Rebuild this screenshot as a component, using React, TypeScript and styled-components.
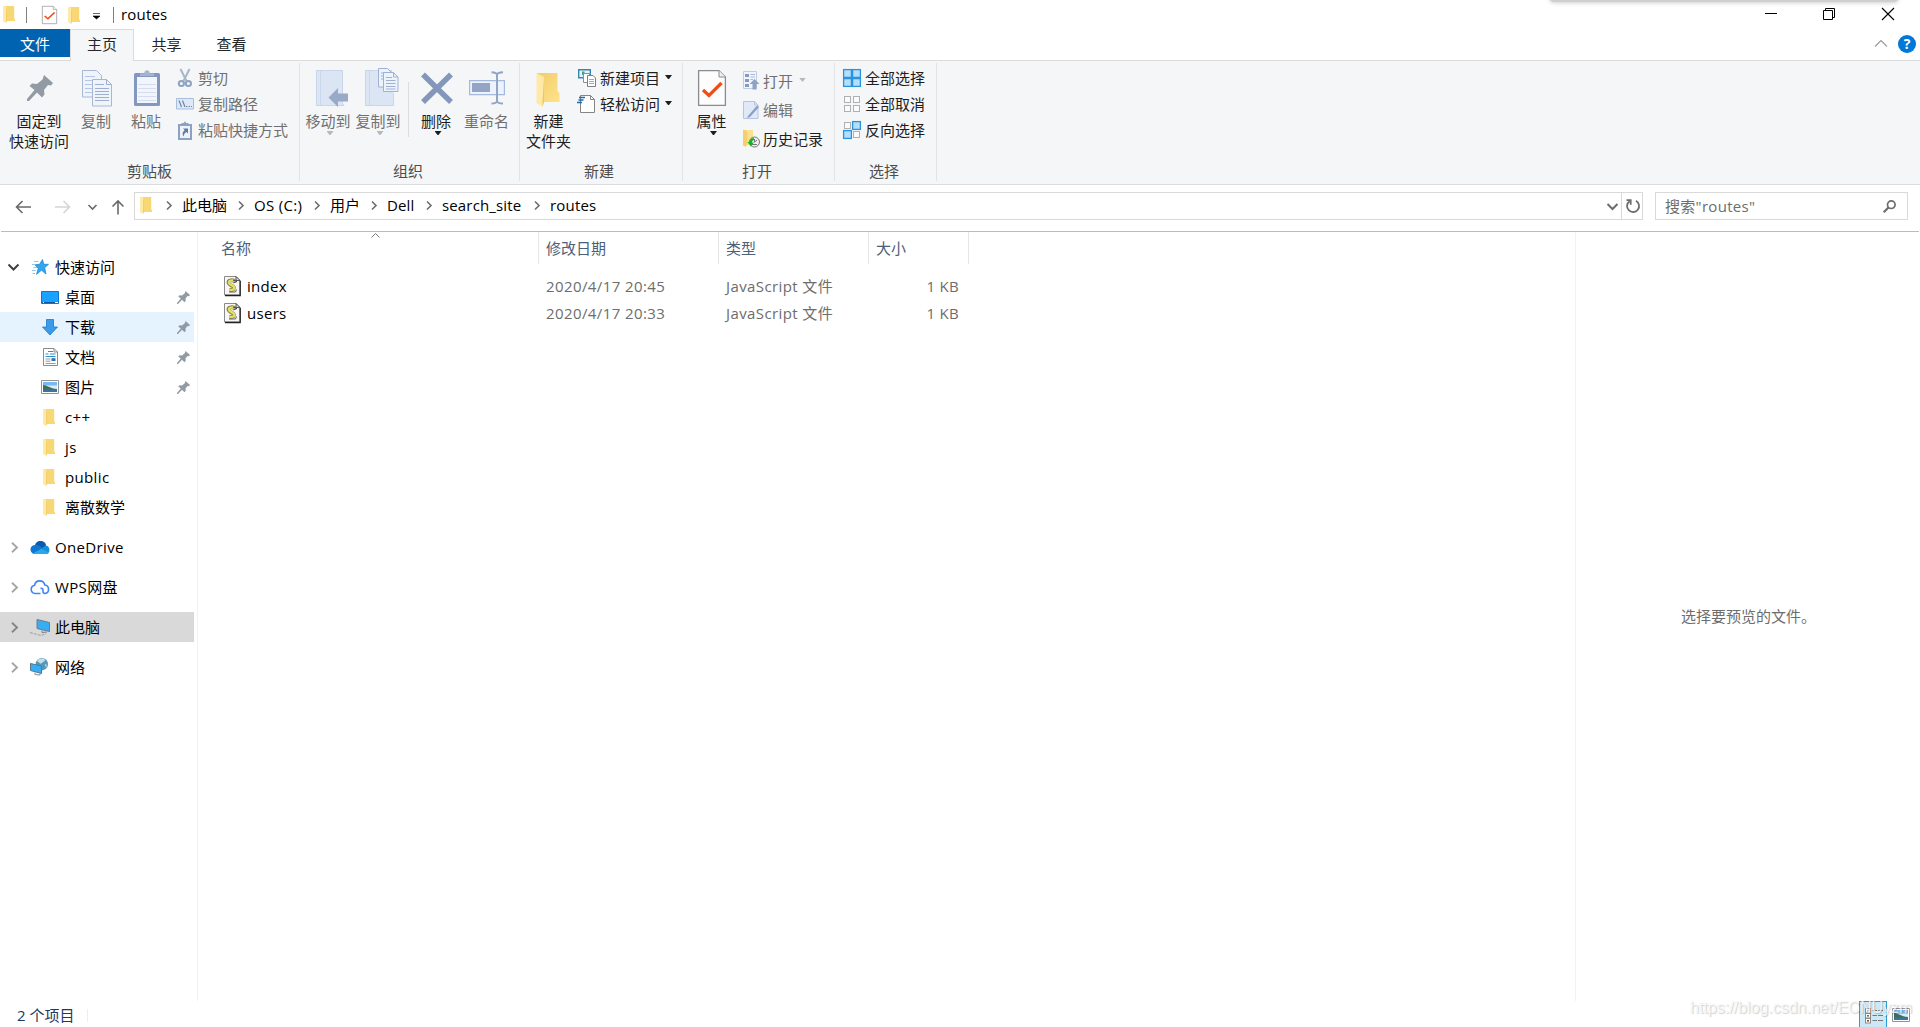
import React from "react";
import styled, { createGlobalStyle } from "styled-components";

const Global = createGlobalStyle`
  * { box-sizing: border-box; }
  body { margin: 0; background: #fff; overflow: hidden; }
`;

const Window = styled.div`
  width: 1920px;
  height: 1027px;
  display: flex;
  flex-direction: column;
  background: #fff;
  color: #000;
  font: 15px/20px "Open Sans", "Noto Sans CJK SC", sans-serif;
  white-space: nowrap;
  overflow: hidden;
  position: relative;
`;

const Svg = styled.svg`
  display: block;
  flex: none;
  overflow: visible;
`;

/* ---------- title bar ---------- */
const TitleBar = styled.header`
  height: 29px;
  display: flex;
  align-items: flex-start;
  padding-left: 3px;
`;
const TitleItem = styled.div<{ $ml?: number; $mt?: number }>`
  margin-left: ${(p) => p.$ml ?? 0}px;
  margin-top: ${(p) => p.$mt ?? 0}px;
`;
const TitleRule = styled.div<{ $ml: number }>`
  width: 1px;
  height: 16px;
  margin: 7px 0 0 ${(p) => p.$ml}px;
  background: #808080;
`;
const Title = styled.div`
  margin: 4px 0 0 7px;
  letter-spacing: 0.2px;
`;
const Controls = styled.div`
  margin: 8px 26px 0 auto;
  display: grid;
  grid-template-columns: 58px 59px 12px;
`;
const TopShadow = styled.div`
  position: absolute;
  left: 1550px;
  top: -6px;
  width: 348px;
  height: 8px;
  background: #cfcfcf;
  box-shadow: 0 0 4px 1px #cfcfcf;
  border-radius: 4px;
`;

/* ---------- tabs ---------- */
const Tabs = styled.nav`
  height: 32px;
  display: flex;
  border-bottom: 1px solid #dadbdc;
`;
const Tab = styled.div<{ $kind?: "file" | "active" }>`
  width: ${(p) => (p.$kind === "file" ? 70 : p.$kind === "active" ? 64 : 65)}px;
  height: ${(p) => (p.$kind === "file" ? 28 : 32)}px;
  padding-top: ${(p) => (p.$kind === "active" ? 4 : 5)}px;
  text-align: center;
  color: ${(p) => (p.$kind === "file" ? "#fff" : "#262626")};
  background: ${(p) => (p.$kind === "file" ? "#0063b1" : p.$kind === "active" ? "#f5f6f7" : "transparent")};
  border: ${(p) => (p.$kind === "active" ? "1px solid #dadbdc" : "0")};
  border-bottom: 0;
`;
const TabsRight = styled.div`
  margin: 6px 4px 0 auto;
  display: flex;
  gap: 11px;
`;
const Help = styled.div`
  width: 18px;
  height: 18px;
  border-radius: 50%;
  background: #0078d7;
  color: #fff;
  font: bold 14px/18px "Open Sans", sans-serif;
  text-align: center;
`;

/* ---------- ribbon ---------- */
const Ribbon = styled.section`
  height: 124px;
  display: flex;
  background: #f5f6f7;
  border-bottom: 1px solid #dadbdc;
`;
const Group = styled.div<{ $w: number }>`
  width: ${(p) => p.$w}px;
  height: 118px;
  margin-top: 2px;
  border-right: 1px solid #e2e3e4;
  display: flex;
  flex-direction: column;
`;
const GroupBody = styled.div<{ $pl: number }>`
  height: 99px;
  padding-left: ${(p) => p.$pl}px;
  display: flex;
`;
const GroupName = styled.div<{ $shift?: number }>`
  text-align: center;
  color: #4d4d4d;
  padding-right: ${(p) => p.$shift ?? 0}px;
`;
const Big = styled.div<{ $w: number; $off?: boolean }>`
  width: ${(p) => p.$w}px;
  display: flex;
  flex-direction: column;
  align-items: center;
  color: ${(p) => (p.$off ? "#707070" : "#1e1e1e")};
`;
const BigIcon = styled.div`
  height: 48px;
  padding-top: 3px;
`;
const Caption = styled.div``;
const Drop = styled.div<{ $off?: boolean; $ml?: number; $mt?: number }>`
  width: 7px;
  height: 4px;
  margin-left: ${(p) => p.$ml ?? 0}px;
  margin-top: ${(p) => p.$mt ?? 0}px;
  background: ${(p) => (p.$off ? "#b8b8b8" : "#1e1e1e")};
  clip-path: polygon(0 0, 100% 0, 57% 100%, 43% 100%);
`;
const Split = styled.div<{ $ml: number; $mr: number }>`
  width: 1px;
  height: 55px;
  margin: 19px ${(p) => p.$mr}px 0 ${(p) => p.$ml}px;
  background: #dcdddf;
`;
const Stack = styled.div<{ $ml?: number; $pt: number; $row: number }>`
  margin-left: ${(p) => p.$ml ?? 0}px;
  padding-top: ${(p) => p.$pt}px;
  display: grid;
  grid-auto-rows: ${(p) => p.$row}px;
  align-content: start;
`;
const Small = styled.div<{ $off?: boolean; $gap?: number }>`
  display: flex;
  align-items: center;
  gap: ${(p) => p.$gap ?? 4}px;
  color: ${(p) => (p.$off ? "#707070" : "#1e1e1e")};
`;

/* ---------- address row ---------- */
const AddressRow = styled.div`
  height: 46px;
  display: flex;
  padding: 7px 12px 0 16px;
`;
const NavButtons = styled.div`
  width: 118px;
  height: 28px;
`;
const PathBox = styled.div`
  width: 1509px;
  height: 28px;
  border: 1px solid #d9d9d9;
  display: flex;
  align-items: center;
  padding-left: 5px;
`;
const Crumb = styled.div<{ $w: number; $ls?: number }>`
  width: ${(p) => p.$w}px;
  display: flex;
  letter-spacing: ${(p) => p.$ls ?? 0}px;
  align-items: center;
  margin-top: -2px;
`;
const CrumbArrow = styled.span`
  width: 16px;
  display: block;
`;
const Refresh = styled.div`
  width: 21px;
  height: 26px;
  margin-left: 3px;
  padding-left: 2px;
  border-left: 1px solid #d9d9d9;
  display: flex;
  align-items: center;
  justify-content: center;
`;
const PathEnd = styled.div`
  margin-left: auto;
  display: flex;
  align-items: center;
`;
const Search = styled.div`
  width: 253px;
  height: 28px;
  margin-left: 12px;
  padding: 0 11px 0 9px;
  border: 1px solid #d9d9d9;
  display: flex;
  align-items: center;
  justify-content: space-between;
  color: #6d6d6d;
  letter-spacing: 0.3px;
`;

/* ---------- body ---------- */
const Body = styled.main`
  height: 770px;
  margin: 0 1px;
  border-top: 1px solid #bcbcbc;
  display: flex;
`;
const Side = styled.aside`
  width: 198px;
  margin-left: -1px;
  padding: 20px 3px 0 0;
  border-right: 1px solid #f2f2f2;
  flex: none;
`;
const SideRow = styled.div<{ $bg?: string; $sub?: boolean; $gap?: boolean }>`
  height: 30px;
  margin-top: ${(p) => (p.$gap ? 10 : 0)}px;
  padding-left: ${(p) => (p.$sub ? 41 : 7)}px;
  padding-right: 4px;
  display: flex;
  align-items: center;
  background: ${(p) => p.$bg ?? "transparent"};
`;
const IconSlot = styled.div<{ $w: number }>`
  width: ${(p) => p.$w}px;
`;
const SideText = styled.div<{ $ls?: number }>`
  flex: 1;
  letter-spacing: ${(p) => p.$ls ?? 0}px;
`;
const Files = styled.section`
  flex: 1;
  position: relative;
`;
const Head = styled.div`
  height: 32px;
  display: grid;
  grid-template-columns: 341px 180px 150px 100px;
  color: #4c607a;
`;
const HeadCell = styled.div<{ $pl: number }>`
  padding: 6px 0 0 ${(p) => p.$pl}px;
  border-right: 1px solid #e5e5e5;
`;
const SortMark = styled.div`
  position: absolute;
  left: 173px;
  top: 1px;
`;
const FileList = styled.div`
  padding-top: 8px;
`;
const FileRow = styled.div`
  height: 27px;
  display: grid;
  grid-template-columns: 28px 320px 180px 133px 100px;
  align-items: center;
  color: #6d6d6d;
`;
const FileIcon = styled.div`
  padding-left: 26px;
`;
const FileName = styled.div`
  color: #000;
  padding-left: 21px;
  letter-spacing: 0.3px;
`;
const Meta = styled.div`
  letter-spacing: 0.4px;
`;
const Size = styled.div`
  text-align: right;
  letter-spacing: 0.3px;
`;
const Preview = styled.aside`
  width: 344px;
  border-left: 1px solid #f2f2f2;
  padding-top: 374px;
  padding-left: 105px;
  color: #6d6d6d;
`;

/* ---------- status ---------- */
const Status = styled.footer`
  height: 26px;
  display: flex;
  padding: 0 10px 0 17px;
  color: #1e395b;
`;
const StatusText = styled.div`
  width: 70px;
  padding-top: 4px;
`;
const StatusRule = styled.div`
  width: 1px;
  height: 13px;
  margin-top: 8px;
  background: #eee;
`;
const ViewModes = styled.div`
  margin-left: auto;
  display: flex;
  gap: 5px;
`;
const ModeOn = styled.div`
  width: 28px;
  height: 28px;
  background: #cce8f6;
  border: 1px solid #26a0da;
  padding: 6px 0 0 5px;
`;
const ModeOff = styled.div`
  padding-top: 7px;
`;
const Watermark = styled.div`
  position: absolute;
  left: 1690px;
  top: 998px;
  font: 16px/20px "Liberation Sans", Arial, sans-serif;
  color: rgba(255, 255, 255, 0.8);
  text-shadow: 1px 1px 1px rgba(0, 0, 0, 0.18), 0 0 1px rgba(0, 0, 0, 0.08);
`;

/* ---------- drawings ---------- */
const Folder = ({ w = 12, h = 17 }: { w?: number; h?: number }) => (
  <Svg width={w} height={h} viewBox="0 0 12 17" preserveAspectRatio="none">
    <path d="M2 0h9.2v12.5l.8.4V15H2z" fill="#f8d775" />
    <path d="M0 0h2.2L4 2.5V15l-1 2-3-1.800z" fill="#ffe9a6" />
    <path d="M3.300 2.200 4 2.500V15l-.8 1.800z" fill="#eec65a" />
  </Svg>
);
const BigFolder = () => (
  <Svg width="24" height="36" viewBox="0 0 24 36">
    <defs>
      <linearGradient id="bf" x1="0" y1="0" x2="1" y2="1">
        <stop offset="0" stopColor="#efcd6c" />
        <stop offset="1" stopColor="#ffe28a" />
      </linearGradient>
    </defs>
    <path d="M1 1h20.500v18l2 2v9H6z" fill="url(#bf)" />
    <path d="M.5 1 8 5v25l-1.500 5L.5 31z" fill="#ffe9a9" />
    <path d="M8 5v25l-1.500 5V30z" fill="#e9c763" />
  </Svg>
);
const Pin = ({ s = 14 }: { s?: number }) => (
  <Svg width={s} height={s} viewBox="0 0 26 26">
    <path d="M17 0l9 8-2 2.500-3-.5-4 5 .5 4.500-2.500 3L10 17.500 2 26H0v-2l7.500-9L2.500 11 5 8.500l5 .5 5.500-4.500z" fill="#929ba3" />
  </Svg>
);
const CheckPage = ({ w, h }: { w: number; h: number }) => (
  <Svg width={w} height={h} viewBox="0 0 28 36" preserveAspectRatio="none">
    <path d="M.6.6H21l6.400 6.400v28.400H.6z" fill="#fdfdfd" stroke="#8c8c8c" strokeWidth="1.300" />
    <path d="M21 .6V7h6.400" fill="#eee" stroke="#8c8c8c" />
    <path d="M5 20l6 5.500L23.500 13" fill="none" stroke="#f04e14" strokeWidth="3.200" />
  </Svg>
);
const CopyPages = () => (
  <Svg width="30" height="37" viewBox="0 0 30 37" fill="#eff4fb" stroke="#a8b8d3">
    <path d="M.5.500h14l5 5v21.500H.5z" />
    <path d="M3 6.500h10M3 10.500h13M3 14.500h8M3 18.500h8M3 22.500h8" stroke="#b4c6e4" />
    <path d="M10.500 9.500h14l5 5v21.500h-19z" />
    <path d="M24.500 9.500v5h5M13 14.500h9M13 18.500h14M13 21.500h14M13 24.500h14M13 27.500h14M13 30.500h14" fill="none" stroke="#9db0d2" />
  </Svg>
);
const Clipboard = () => (
  <Svg width="26" height="37" viewBox="0 0 26 37">
    <rect y="4" width="26" height="33" rx="1.500" fill="#8497bc" />
    <path d="M3 8h20v26H3z" fill="#f2f5fb" />
    <path d="M4 15.500h18M4 19.500h18M4 23.500h18M4 27.500h18M4 31.500h18" stroke="#d3dded" />
    <path d="M6 7V4.500h4.500a2.600 2.600 0 1 1 5 0H20V7z" fill="#a5b4d0" />
  </Svg>
);
const Scissors = () => (
  <Svg width="14" height="19" viewBox="0 0 14 19" fill="none" stroke="#8ea3c0" strokeWidth="2">
    <path d="M2.500 0 8.500 12M11.500 0l-6 12" stroke="#a9b6c8" />
    <circle cx="3.400" cy="14.500" r="2.600" />
    <circle cx="10.400" cy="14.500" r="2.600" />
  </Svg>
);
const PathIcon = () => (
  <Svg width="18" height="12" viewBox="0 0 18 12">
    <path d="M.5.500h17v10.500H.5z" fill="#dfe9f6" stroke="#a8bddb" />
    <path d="M3 2.500 5.500 9M6.500 2.500 9 9M10 8.500h1.500M12.500 8.500H14M15 8.500h1" stroke="#6f87ad" strokeWidth="1.200" />
  </Svg>
);
const Shortcut = () => (
  <Svg width="14" height="19" viewBox="0 0 14 19">
    <path d="M1 4h12v14H1z" fill="#eef3fa" stroke="#8da1c4" strokeWidth="2" />
    <path d="M3.500 4V2H6a1 1.500 0 0 1 2 0h2.500v2z" fill="#8da1c4" />
    <path d="M5 7.500h5v5L8.500 11C6.500 12 6 13 5.700 15.500 3.700 13 5 10.500 6.700 9.300z" fill="#6179a5" />
  </Svg>
);
const MoveTo = () => (
  <Svg width="32" height="38" viewBox="0 0 32 38">
    <path d="M.5.500h26v33l1.500 2H.5z" fill="#dbe5f3" stroke="#c8d5ea" />
    <path d="M4.500 1v34" stroke="#cad8ed" />
    <path d="M12.500 27.500 22 18v5.500h10v8H22V37z" fill="#99aac8" />
  </Svg>
);
const CopyTo = () => (
  <Svg width="34" height="39" viewBox="0 0 34 39">
    <path d="M.5 2.500h26v22l2 1v12H.5z" fill="#dbe5f3" stroke="#c8d5ea" />
    <path d="M4.500 3v34" stroke="#cad8ed" />
    <g fill="#edf3fb" stroke="#9fb1d3">
      <path d="M13.500.500h9l4 4V19h-13z" />
      <path d="M16 5h7M16 8h7M16 11h7" />
      <path d="M18.500 4.500h10l4.500 4.500v14.500H18.500z" />
      <path d="M28.500 4.500V9H33M21 9.500h6M21 12.500h9.500M21 15.500h9.500M21 18.500h9.500M21 21h9.500" fill="none" />
    </g>
  </Svg>
);
const DeleteX = () => (
  <Svg width="32" height="32" viewBox="0 0 32 32">
    <path d="M2 2.500 30 30M30 2.500 2 30" stroke="#8496ba" strokeWidth="5.500" />
  </Svg>
);
const Rename = () => (
  <Svg width="36" height="34" viewBox="0 0 36 34">
    <path d="M.6 9.600h34.800v14H.6z" fill="#edf3fc" stroke="#a4b9dc" strokeWidth="1.200" />
    <path d="M3 12h18v9H3z" fill="#93a4c4" />
    <path d="M22.500 1.200c3.500 0 5 .8 5.500 2.300.5-1.500 2-2.300 6-2.300M22.500 32.500c3.500 0 5-.8 5.500-2.300.5 1.500 2 2.300 6 2.300M28 3v28" fill="none" stroke="#93a4c4" strokeWidth="2" />
  </Svg>
);
const NewItem = () => (
  <Svg width="18" height="18" viewBox="0 0 18 18">
    <path d="M.7.700h11.600v8H.7z" fill="#e4f3fb" stroke="#3a86ac" strokeWidth="1.400" />
    <path d="M4 2.500h2.500v3.500H4z" fill="#3c9b8b" />
    <path d="M5.500 4.500h6v9h-6z" fill="#fff" stroke="#8f8f8f" />
    <path d="M9.500 6.500h5.500l2.500 2.500v8.500h-8z" fill="#fff" stroke="#7f7f7f" />
    <path d="M11 10.500h5M11 12.500h5M11 14.500h5" stroke="#7fb2e5" />
  </Svg>
);
const EasyAccess = () => (
  <Svg width="18" height="18" viewBox="0 0 18 18">
    <path d="M2.500.500h10l4 4v13h-14z" fill="#fff" stroke="#858585" />
    <path d="M12.500.500v4h4" fill="none" stroke="#858585" />
    <path d="M1 2.500h6M.5 5h5M-1 7.500h5" stroke="#1b6bb0" strokeWidth="1.500" />
  </Svg>
);
const OpenIcon = () => (
  <Svg width="17" height="19" viewBox="0 0 17 19">
    <path d="M.5.500h13v17H.5z" fill="#f0f4fb" stroke="#bfcde4" />
    <path d="M2 3h4v3H2zM2 8h4v3H2zM2 13h4v3H2z" fill="#8599c2" />
    <path d="M7.500 3.500H12M7.500 6h4.500M7.500 8.500H10" stroke="#a8b9d8" />
    <path d="M6.500 13 11.500 8l5 5h-3v5.500h-4V13z" fill="#8fa2c6" />
  </Svg>
);
const EditIcon = () => (
  <Svg width="17" height="18" viewBox="0 0 17 18">
    <path d="M.5.500h11l3.500 3.500v13.500H.5z" fill="#dfe9f7" stroke="#b5c5e0" />
    <path d="m5 15 9-10.500 2 1.500-9 10-3 1z" fill="#8c9fc4" />
    <path d="M11.500.500V4H15" fill="none" stroke="#b5c5e0" />
  </Svg>
);
const HistoryIcon = () => (
  <Svg width="17" height="18" viewBox="0 0 17 18">
    <path d="M0 0h10v7.500L6 15H0z" fill="#fae08f" />
    <path d="M0 0h2l2.500 2v11L3 17l-3-1.500z" fill="#f5cf69" />
    <circle cx="11.500" cy="12" r="5" fill="#ededed" stroke="#777" />
    <path d="M11.500 9v3.200L14 10M9 14.500h5" fill="none" stroke="#777" />
    <path d="M11 8C8 8 6.500 10 6.500 12H4.500l3.300 4.500L11 12.500H9c0-1.500.500-2 2-2.500z" fill="#18b12c" />
  </Svg>
);
const SelectIcon = ({ on }: { on: number[] }) => (
  <Svg width="18" height="18" viewBox="0 0 18 18">
    {[[0, 0], [9, 0], [0, 9], [9, 9]].map(([x, y], i) =>
      on.includes(i) ? (
        <rect key={i} x={x + 0.6} y={y + 0.6} width="7.800" height="7.800" fill="#b5def9" stroke="#2893e3" strokeWidth="1.300" />
      ) : (
        <rect key={i} x={x + (x ? 1.5 : 1.5)} y={y + 1.5} width="6" height="6" fill="#fafafa" stroke="#b0b0b0" />
      )
    )}
  </Svg>
);
const Chevron = ({ d, w, h, c = "#6d6d6d", sw = 1.6 }: { d: string; w: number; h: number; c?: string; sw?: number }) => (
  <Svg width={w} height={h} viewBox={`0 0 ${w} ${h}`}>
    <path d={d} fill="none" stroke={c} strokeWidth={sw} />
  </Svg>
);
const Star = () => (
  <Svg width="18" height="16" viewBox="0 0 18 16">
    <path d="M11.500.500l1.300 4.800H17.500l-3.800 3.400L15 15l-4.500-3.700L5.500 15.300 7.200 9.500 4 5.800l4.500-.5z" fill="#31a5ee" stroke="#1484cd" strokeWidth=".7" />
    <path d="M3 2.500h4.500M1 5.500h3.500M2.500 8.500H6M1 11.500h3.500M1.500 14.500h2.500" stroke="#8cc8ee" />
  </Svg>
);
const Desktop = () => (
  <Svg width="18" height="13" viewBox="0 0 18 13">
    <path d="M.5.500h17v12H.5z" fill="#1ba1ff" stroke="#0c77cd" />
    <path d="M1 11.500h16" stroke="#0b5a9b" />
    <path d="M2 11.500h1M14 11.500h3" stroke="#fff" />
  </Svg>
);
const Download = () => (
  <Svg width="16" height="17" viewBox="0 0 16 17">
    <path d="M4.500.500h7V8h4L8 16 .5 8h4z" fill="#3c9aea" stroke="#1c78c8" strokeWidth=".8" />
  </Svg>
);
const DocIcon = () => (
  <Svg width="15" height="18" viewBox="0 0 15 18">
    <path d="M.5.500H11L14.500 4v13.500H.5z" fill="#fff" stroke="#8a8a8a" />
    <path d="M11 .500V4h3.500" fill="none" stroke="#8a8a8a" />
    <path d="M5 3.500h5M2.500 6h3M7 6h5.500M2.500 8.500h10" stroke="#2f8fce" strokeWidth="1.200" />
    <path d="M2.500 11h5M2.500 13.200h5M2.500 15.500h10" stroke="#999" />
    <path d="M8.500 10.200h4v2.800h-4z" fill="#2773ad" />
  </Svg>
);
const Picture = () => (
  <Svg width="18" height="14" viewBox="0 0 18 14">
    <path d="M.5.500h17v13H.5z" fill="#fff" stroke="#929292" />
    <path d="M2 2h14v5H2z" fill="#7ab7f5" />
    <path d="M2 5.500h14V9H2z" fill="#d8ecfb" />
    <path d="M2 5c4 0 7 3.500 14 4v1H2z" fill="#3e6f58" />
    <path d="M2 9.500h14V12H2z" fill="#3b749c" />
  </Svg>
);
const OneDrive = () => (
  <Svg width="20" height="13" viewBox="0 0 20 13">
    <path d="M5 5C5 2 7.500 0 10.500 0c3 0 5.500 2 5.500 4.500L12 9z" fill="#0a5bb0" />
    <path d="M4.500 13A4.400 4.400 0 0 1 5.500 4c3-.5 5 1 7 3L8 13z" fill="#0f77d0" />
    <path d="M11.500 7.500 15.500 4.500A4.300 4.300 0 0 1 16 13H4.500z" fill="#1490df" />
    <path d="M2.500 12.500 11.500 7.700l7.500 4c-.7.900-1.700 1.300-3 1.300H4.500z" fill="#28a8ea" />
  </Svg>
);
const WpsCloud = () => (
  <Svg width="20" height="16" viewBox="0 0 20 16">
    <path d="M10.500 14.500H5A4.200 4.200 0 0 1 4.600 6.200 5.200 5.200 0 0 1 14.800 6a4.300 4.300 0 0 1 .2 8.500c-2.500 0-2-2.500-2-3.500S12 9 10.500 9.500" fill="none" stroke="#4286f5" strokeWidth="1.600" />
  </Svg>
);
const ThisPc = () => (
  <Svg width="20" height="17" viewBox="0 0 20 17">
    <path d="M7 .500 19.500 3.500v9L7 9.500z" fill="#36adf5" stroke="#6c7c89" />
    <path d="M12 11.500v2l5-.5" fill="none" stroke="#77838d" />
    <path d="M0 13.500l11 3 5-2" fill="none" stroke="#a9b0b5" strokeWidth="1.300" strokeDasharray="3 1" />
  </Svg>
);
const Network = () => (
  <Svg width="18" height="18" viewBox="0 0 18 18">
    <circle cx="11.800" cy="6.200" r="6.200" fill="#5798b8" />
    <path d="M7 3c2-3 7-3 8-1-1 3-4 2-4 4M15 6c2 0 2 2 1 4" fill="#bfe0ec" />
    <path d="M.5 5.500 11.500 8v7.500L.5 12.500z" fill="#36adf5" stroke="#55788d" />
    <path d="M5 14.500v2l5 .5v-1.500" fill="none" stroke="#83909a" />
  </Svg>
);
const ScriptFile = () => (
  <Svg width="17" height="20" viewBox="0 0 17 20">
    <path d="M.5.500h11.500l4 4v14.500H.5z" fill="#f7f7f7" stroke="#8a8a8a" />
    <path d="M16.200 5v14.500H1" fill="none" stroke="#222" strokeWidth="1.300" />
    <path d="M12 .500v4h4z" fill="#ddd" stroke="#333" strokeWidth=".8" />
    <path d="M11.500 5.500C9 3.500 4 4 4.500 7c.5 2.500 5.500 2.500 5.500 5 0 1.500-2 2-4.500 2" fill="none" stroke="#80804a" strokeWidth="3.800" />
    <path d="M10.500 5C8.500 4 4.500 4.500 5 7c.5 2 5.500 2.500 5.500 5 0 1.500-2.500 2.200-5 2" fill="none" stroke="#e6df66" strokeWidth="2.400" />
    <path d="M9 4l4 1.500-3.500 1.500" fill="#aaa" stroke="#444" strokeWidth=".9" />
    <path d="M5 16h6.500l1-2.500" fill="none" stroke="#555" strokeWidth=".9" />
  </Svg>
);
const DetailsIcon = () => (
  <Svg width="18" height="16" viewBox="0 0 18 16">
    {["#3a6ea5", "#4f8a3c", "#b33a2a"].map((c, i) => (
      <g key={c}>
        <rect x=".5" y={0.5 + i * 5} width="5" height="4.500" fill="#fff" stroke="#8a8a8a" />
        <rect x="2" y={2 + i * 5} width="2" height="1.600" fill={c} />
        <path d={`M7.500 ${2.5 + i * 5}h4.500M13 ${2.5 + i * 5}h5`} stroke="#777" />
      </g>
    ))}
  </Svg>
);

const crumbs: [string, number, number][] = [
  ["此电脑", 72, 0],
  ["OS (C:)", 76, 0.3],
  ["用户", 57, 0],
  ["Dell", 55, 0.1],
  ["search_site", 108, 0.15],
  ["routes", 80, 0.2],
];
const quick: [string, React.ReactNode, boolean][] = [
  ["桌面", <Desktop />, true],
  ["下载", <Download />, true],
  ["文档", <DocIcon />, true],
  ["图片", <Picture />, true],
  ["c++", <Folder />, false],
  ["js", <Folder />, false],
  ["public", <Folder />, false],
  ["离散数学", <Folder />, false],
];
const roots: [string, React.ReactNode][] = [
  ["OneDrive", <OneDrive />],
  ["WPS网盘", <WpsCloud />],
  ["此电脑", <ThisPc />],
  ["网络", <Network />],
];
const files = [
  ["index", "2020/4/17 20:45"],
  ["users", "2020/4/17 20:33"],
];
const spacingOf = (t: string) => (/[a-z]/i.test(t) ? 0.35 : 0);

export default function App() {
  return (
    <Window>
      <Global />
      <TitleBar>
        <TitleItem $mt={6}><Folder /></TitleItem>
        <TitleRule $ml={11} />
        <TitleItem $ml={15} $mt={6}><CheckPage w={15} h={18} /></TitleItem>
        <TitleItem $ml={11} $mt={7}><Folder /></TitleItem>
        <TitleItem $ml={13} $mt={13}>
          <Svg width="7" height="6" viewBox="0 0 7 6"><path d="M0 .500h7M0 3h7L3.500 6z" fill="#000" stroke="#000" strokeWidth=".6" /></Svg>
        </TitleItem>
        <TitleRule $ml={13} />
        <Title>routes</Title>
        <Controls>
          <Svg width="12" height="12"><path d="M0 5.500h12" stroke="#000" /></Svg>
          <Svg width="12" height="12" fill="none" stroke="#000"><path d="M.5 2.500h9v9h-9zM2.500 2.500v-2h9v9h-2" /></Svg>
          <Svg width="12" height="12"><path d="M0 0l12 12M12 0 0 12" stroke="#000" strokeWidth="1.100" /></Svg>
        </Controls>
      </TitleBar>
      <TopShadow />
      <Tabs>
        <Tab $kind="file">文件</Tab>
        <Tab $kind="active">主页</Tab>
        <Tab>共享</Tab>
        <Tab>查看</Tab>
        <TabsRight>
          <TitleItem $mt={5}><Chevron w={12} h={7} d="M0 6.500l6-6 6 6" c="#999" sw={1.1} /></TitleItem>
          <Help>?</Help>
        </TabsRight>
      </Tabs>
      <Ribbon>
        <Group $w={300}>
          <GroupBody $pl={8}>
            <Big $w={62}>
              <BigIcon><TitleItem $mt={9} $ml={1}><Pin s={26} /></TitleItem></BigIcon>
              <Caption>固定到</Caption>
              <Caption>快速访问</Caption>
            </Big>
            <Big $w={52} $off>
              <BigIcon><TitleItem $mt={4} $ml={1}><CopyPages /></TitleItem></BigIcon>
              <Caption>复制</Caption>
            </Big>
            <Big $w={48} $off>
              <BigIcon><TitleItem $mt={3} $ml={1}><Clipboard /></TitleItem></BigIcon>
              <Caption>粘贴</Caption>
            </Big>
            <Stack $ml={6} $pt={2} $row={26}>
              <Small $off><IconSlot $w={18}><TitleItem $ml={2}><Scissors /></TitleItem></IconSlot>剪切</Small>
              <Small $off><IconSlot $w={18}><PathIcon /></IconSlot>复制路径</Small>
              <Small $off><IconSlot $w={18}><TitleItem $ml={2}><Shortcut /></TitleItem></IconSlot>粘贴快捷方式</Small>
            </Stack>
          </GroupBody>
          <GroupName>剪贴板</GroupName>
        </Group>
        <Group $w={220}>
          <GroupBody $pl={3}>
            <Big $w={50} $off>
              <BigIcon><TitleItem $mt={4} $ml={8}><MoveTo /></TitleItem></BigIcon>
              <Caption>移动到</Caption>
              <Drop $off $ml={4} />
            </Big>
            <Big $w={50} $off>
              <BigIcon><TitleItem $mt={2} $ml={8}><CopyTo /></TitleItem></BigIcon>
              <Caption>复制到</Caption>
              <Drop $off $ml={4} />
            </Big>
            <Split $ml={5} $mr={2} />
            <Big $w={50}>
              <BigIcon><TitleItem $mt={6} $ml={2}><DeleteX /></TitleItem></BigIcon>
              <Caption>删除</Caption>
              <Drop $ml={4} />
            </Big>
            <Big $w={51} $off>
              <BigIcon><TitleItem $mt={5}><Rename /></TitleItem></BigIcon>
              <Caption>重命名</Caption>
            </Big>
          </GroupBody>
          <GroupName $shift={3}>组织</GroupName>
        </Group>
        <Group $w={163}>
          <GroupBody $pl={4}>
            <Big $w={49}>
              <BigIcon><TitleItem $mt={6} $ml={-2}><BigFolder /></TitleItem></BigIcon>
              <Caption>新建</Caption>
              <Caption>文件夹</Caption>
            </Big>
            <Stack $ml={5} $pt={2} $row={26}>
              <Small><NewItem />新建项目<Drop $ml={1} $mt={-2} /></Small>
              <Small><EasyAccess />轻松访问<Drop $ml={1} $mt={-2} /></Small>
            </Stack>
          </GroupBody>
          <GroupName $shift={4}>新建</GroupName>
        </Group>
        <Group $w={152}>
          <GroupBody $pl={4}>
            <Big $w={49}>
              <BigIcon><TitleItem $mt={4}><CheckPage w={28} h={36} /></TitleItem></BigIcon>
              <Caption>属性</Caption>
              <Drop $ml={4} />
            </Big>
            <Stack $ml={7} $pt={3} $row={29}>
              <Small $off $gap={3}><OpenIcon />打开<Drop $off $ml={3} $mt={-2} /></Small>
              <Small $off $gap={3}><EditIcon />编辑</Small>
              <Small $gap={3}><HistoryIcon />历史记录</Small>
            </Stack>
          </GroupBody>
          <GroupName $shift={3}>打开</GroupName>
        </Group>
        <Group $w={102}>
          <GroupBody $pl={8}>
            <Stack $pt={2} $row={26}>
              <Small $gap={4}><SelectIcon on={[0, 1, 2, 3]} />全部选择</Small>
              <Small $gap={4}><SelectIcon on={[]} />全部取消</Small>
              <Small $gap={4}><SelectIcon on={[1, 2]} />反向选择</Small>
            </Stack>
          </GroupBody>
          <GroupName $shift={3}>选择</GroupName>
        </Group>
      </Ribbon>
      <AddressRow>
        <NavButtons>
          <Svg width="118" height="28" viewBox="16 192 118 28" fill="none" strokeWidth="1.600">
            <path d="M16.500 207H31M22.500 201l-6 6 6 6" stroke="#6a6a6a" />
            <path d="M55 207h14.500M63.500 201l6 6-6 6" stroke="#d5d5d5" />
            <path d="M88.500 205l4 4 4-4" stroke="#6a6a6a" />
            <path d="M118 214.500V201M112.500 206.500l5.500-5.500 5.500 5.500" stroke="#6a6a6a" />
          </Svg>
        </NavButtons>
        <PathBox>
          <TitleItem $mt={-2}><Folder /></TitleItem>
          <TitleItem $ml={14} />
          {crumbs.map(([t, w, ls]) => (
            <Crumb key={t} $w={w} $ls={ls}>
              <CrumbArrow><Chevron w={6} h={9} d="M1 .5l4 4-4 4" /></CrumbArrow>
              {t}
            </Crumb>
          ))}
          <PathEnd>
            <Chevron w={11} h={7} d="M.5 1l5 5 5-5" sw={2} />
            <Refresh>
              <Svg width="14" height="14" viewBox="0 0 14 14" fill="none" stroke="#6d6d6d" strokeWidth="1.800">
                <path d="M10 1.800A6 6 0 1 1 3.500 2.200M.5 1.200h4.200v4.500" />
              </Svg>
            </Refresh>
          </PathEnd>
        </PathBox>
        <Search>
          <span>搜索"routes"</span>
          <Svg width="13" height="13" viewBox="0 0 13 13" fill="none" stroke="#6d6d6d">
            <circle cx="8.300" cy="4.700" r="3.800" strokeWidth="1.700" />
            <path d="M5.500 7.500.7 12.300" strokeWidth="2.200" />
          </Svg>
        </Search>
      </AddressRow>
      <Body>
        <Side>
          <SideRow>
            <IconSlot $w={24}><Chevron w={13} h={8} d="M1.500 1.500l5 5 5-5" c="#404040" sw={2} /></IconSlot>
            <IconSlot $w={24}><Star /></IconSlot>
            <SideText>快速访问</SideText>
          </SideRow>
          {quick.map(([t, icon, pinned]) => (
            <SideRow key={t} $sub $bg={t === "下载" ? "#e5f3ff" : undefined}>
              <IconSlot $w={24}><TitleItem $ml={t === "桌面" || t === "图片" ? 0 : t === "下载" ? 1 : 2}>{icon}</TitleItem></IconSlot>
              <SideText $ls={spacingOf(t)}>{t}</SideText>
              {pinned && <Pin s={13} />}
            </SideRow>
          ))}
          {roots.map(([t, icon]) => (
            <SideRow key={t} $gap $bg={t === "此电脑" ? "#d9d9d9" : undefined}>
              <IconSlot $w={23}><TitleItem $ml={4} $mt={1}><Chevron w={7} h={11} d="M1 .8l5 4.700-5 4.700" c={t === "此电脑" ? "#858585" : "#a6a6a6"} sw={1.9} /></TitleItem></IconSlot>
              <IconSlot $w={25}>{icon}</IconSlot>
              <SideText $ls={spacingOf(t)}>{t}</SideText>
            </SideRow>
          ))}
        </Side>
        <Files>
          <SortMark><Chevron w={9} h={5} d="M.5 4.500l4-4 4 4" c="#777" sw={1} /></SortMark>
          <Head>
            <HeadCell $pl={23}>名称</HeadCell>
            <HeadCell $pl={7}>修改日期</HeadCell>
            <HeadCell $pl={7}>类型</HeadCell>
            <HeadCell $pl={7}>大小</HeadCell>
          </Head>
          <FileList>
            {files.map(([n, d]) => (
              <FileRow key={n}>
                <FileIcon><ScriptFile /></FileIcon>
                <FileName>{n}</FileName>
                <Meta>{d}</Meta>
                <Meta>JavaScript 文件</Meta>
                <Size>1 KB</Size>
              </FileRow>
            ))}
          </FileList>
        </Files>
        <Preview>选择要预览的文件。</Preview>
      </Body>
      <Status>
        <StatusText>2 个项目</StatusText>
        <StatusRule />
        <ViewModes>
          <ModeOn><DetailsIcon /></ModeOn>
          <ModeOff><Picture /></ModeOff>
        </ViewModes>
      </Status>
      <Watermark>https://blog.csdn.net/ECNUyzm</Watermark>
    </Window>
  );
}
